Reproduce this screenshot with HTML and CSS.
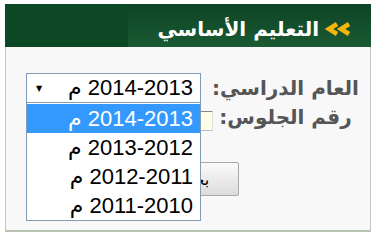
FILE: index.html
```html
<!DOCTYPE html>
<html lang="ar" dir="rtl">
<head>
  <meta charset="UTF-8" />
  <title>التعليم الأساسي</title>
  <link rel="stylesheet" href="styles.css">
</head>
<body>

<div class="box">
  <!-- Header bar -->
  <div class="header">
    <div class="header-title">
      <svg class="arrows" width="30" height="14" viewBox="0 0 30 14">
        <path d="M14 2 L6 7 L14 12" />
        <path d="M26 2 L18 7 L26 12" />
      </svg>
      <span>التعليم الأساسي</span>
    </div>
    <div class="header-fill"></div>
  </div>

  <!-- Search form -->
  <div class="panel">
    <div class="form">
      <label class="label">العام الدراسي:</label>
      <div class="select-wrap">
        <div class="select">
          <span class="value">2014-2013 م</span>
          <span class="caret">&#9660;</span>
        </div>
        <div class="dropdown">
          <div class="option active">2014-2013 م</div>
          <div class="option">2013-2012 م</div>
          <div class="option">2012-2011 م</div>
          <div class="option">2011-2010 م</div>
        </div>
      </div>

      <label class="label">رقم الجلوس:</label>
      <div class="field"><input class="input" type="text"></div>

      <div class="actions"><button class="btn">بحث</button></div>
    </div>
  </div>
</div>

</body>
</html>
```

FILE: styles.css
```css
body {
  margin: 0;
  background: #fff;
  font-family: "DejaVu Sans", sans-serif;
}
.box {
  margin: 4px 9px 0 5px;
  width: 366px;
}
.header {
  display: flex;
  height: 43px;
}
.header-title {
  flex: 0 0 243px;
  display: flex;
  align-items: center;
  gap: 4px;
  padding: 6px 18px 0 0;
  box-sizing: border-box;
  background: linear-gradient(#0d4426, #1a5a32);
  color: #fff;
  font-weight: bold;
  font-size: 20px;
}
.header-fill {
  flex: 1;
  background: #0c4826;
}
.arrows path {
  fill: none;
  stroke: #f5b50a;
  stroke-width: 4.5;
}
.panel {
  background: #f8f8f8;
  border-left: 1px solid #c4c4c4;
  border-right: 1px solid #c4c4c4;
  border-bottom: 2px solid #b7c2b0;
  height: 185px;
  padding: 26px 8px 0 20px;
  box-sizing: border-box;
}
.form {
  display: grid;
  grid-template-columns: 153px 175px;
  column-gap: 8px;
}
.label {
  color: #555;
  font-weight: bold;
  font-size: 20px;
  text-align: center;
  align-self: center;
}
.select-wrap {
  position: relative;
  height: 30px;
}
.select {
  height: 30px;
  box-sizing: border-box;
  border: 1px solid #7f9db9;
  background: #fff;
  display: flex;
  align-items: center;
  justify-content: space-between;
  padding: 0 7px 0 7px;
}
.value, .option {
  font-family: "Liberation Sans", "DejaVu Sans", sans-serif;
  font-size: 22px;
  color: #000;
}
.caret {
  font-size: 8px;
  color: #000;
  margin-left: 2px;
}
.dropdown {
  position: absolute;
  top: 30px;
  left: 0;
  right: 0;
  background: #fff;
  border: 1px solid #7f9db9;
  border-top: none;
  padding-top: 1px;
}
.option {
  height: 29px;
  line-height: 29px;
  padding-right: 7px;
}
.option.active {
  background: #3399ff;
  color: #fff;
}
.field {
  margin-top: 8px;
}
.input {
  display: block;
  width: 130px;
  height: 20px;
  box-sizing: border-box;
  margin-right: -12px;
  background: #fffde8;
  border: 1px solid #bbb;
  border-top-color: #888;
  border-right-color: #ddd;
}
.actions {
  grid-column: 1 / -1;
  justify-self: center;
  margin-top: 31px;
}
.btn {
  width: 90px;
  height: 34px;
  border: 1px solid #a8a8a8;
  border-radius: 2px;
  background: linear-gradient(#fafafa, #dcdcdc);
  font-family: "DejaVu Sans", sans-serif;
  font-size: 16px;
  color: #000;
}
```
